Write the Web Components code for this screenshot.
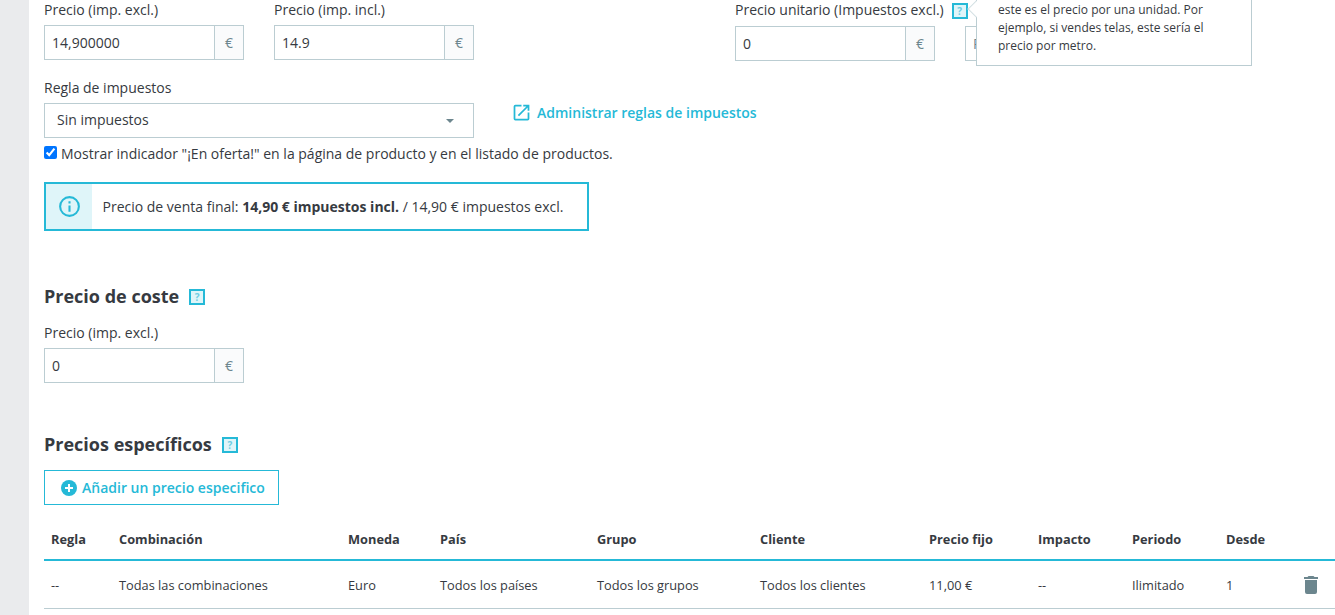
<!DOCTYPE html>
<html lang="es">
<head>
<meta charset="utf-8">
<title>Precios</title>
<style>
  html, body { margin: 0; height: 615px; overflow: hidden; background: #eaebed; }
  body { font-family: "Open Sans", sans-serif; color: #363a41; }
  .top { display: flex; align-items: flex-start; }
  .row { display: flex; gap: 30px; }
  .sale { display: flex; align-items: center; gap: 4px; margin-top: 4px; height: 20px; font-size: 14px; white-space: nowrap; }
  .sale input { margin: 0; }
  .sale span { position: relative; top: 1px; }
  .cost { margin-top: 53px; }
  .cost-field { margin-top: 15px; }
  .specific { margin-top: 49px; }
</style>
</head>
<body>
<price-page>
  <section class="top">
    <div class="row">
      <price-field label="Precio (imp. excl.)" value="14,900000"></price-field>
      <price-field label="Precio (imp. incl.)" value="14.9"></price-field>
    </div>
    <unit-price>
      <hover-tip>este es el precio por una unidad. Por ejemplo, si vendes telas, este sería el precio por metro.</hover-tip>
    </unit-price>
  </section>
  <tax-rule></tax-rule>
  <label class="sale"><input type="checkbox" checked><span>Mostrar indicador "¡En oferta!" en la página de producto y en el listado de productos.</span></label>
  <info-alert>Precio de venta final: <b>14,90 € impuestos incl.</b> / 14,90 € impuestos excl.</info-alert>
  <section-title class="cost">Precio de coste</section-title>
  <price-field class="cost-field" label="Precio (imp. excl.)" value="0"></price-field>
  <section-title class="specific">Precios específicos</section-title>
  <add-button>Añadir un precio especifico</add-button>
  <specific-table></specific-table>
</price-page>

<script>
// each component keeps its own markup and styles in an open shadow root
class PricePage extends HTMLElement {
  connectedCallback() {
    this.attachShadow({ mode: 'open' });
    this.shadowRoot.innerHTML = `
      <style>
        :host {
          display: block;
          margin-left: 29px;
          padding-left: 15px;
          height: 615px;
          background: #fff;
          overflow: hidden;
          position: relative;
        }
      </style>
      <slot></slot>
    `;
  }
}

class PriceField extends HTMLElement {
  connectedCallback() {
    this.attachShadow({ mode: 'open' });
    this.shadowRoot.innerHTML = `
      <style>
        :host { display: block; width: 200px; }
        .label { font-size: 14px; line-height: 19px; height: 25px; white-space: nowrap; color: #363a41; }
        .box {
          display: flex;
          height: 35px;
          box-sizing: border-box;
          border: 1px solid #bbcdd2;
          font-size: 14px;
          color: #363a41;
        }
        .value { flex: 1; padding-left: 7px; line-height: 33px; }
        .unit {
          width: 28px;
          border-left: 1px solid #bbcdd2;
          background: #fafbfc;
          color: #6c868e;
          text-align: center;
          line-height: 33px;
        }
      </style>
      <div class="label">${this.getAttribute('label')}</div>
      <div class="box">
        <span class="value">${this.getAttribute('value')}</span>
        <span class="unit">€</span>
      </div>
    `;
  }
}

class HelpMark extends HTMLElement {
  connectedCallback() {
    this.attachShadow({ mode: 'open' });
    this.shadowRoot.innerHTML = `
      <style>
        :host {
          display: inline-block;
          width: 16px;
          height: 16px;
          box-sizing: border-box;
          border: 2px solid #25b9d7;
          background: #dff5f9;
          color: #6fcde2;
          font: 700 10px/12px "Open Sans", sans-serif;
          text-align: center;
        }
      </style>?
    `;
  }
}

class UnitPrice extends HTMLElement {
  connectedCallback() {
    this.attachShadow({ mode: 'open' });
    this.shadowRoot.innerHTML = `
      <style>
        :host { display: block; margin-left: 261px; }
        .label { display: flex; align-items: flex-start; gap: 8px; font-size: 14px; line-height: 19px; height: 26px; white-space: nowrap; }
        .label help-mark { margin-top: 3px; }
        .inputs { display: flex; gap: 30px; }
        .box { display: flex; width: 200px; height: 35px; box-sizing: border-box; border: 1px solid #bbcdd2; font-size: 14px; }
        .value { flex: 1; padding-left: 7px; line-height: 33px; }
        .unit { width: 28px; border-left: 1px solid #bbcdd2; background: #fafbfc; color: #6c868e; text-align: center; line-height: 33px; }
        .other { width: 60px; height: 35px; box-sizing: border-box; border: 1px solid #bbcdd2; padding-left: 7px; font-size: 14px; line-height: 33px; color: #6c868e; }
      </style>
      <div class="label">Precio unitario (Impuestos excl.) <help-mark></help-mark></div>
      <div class="inputs">
        <div class="box"><span class="value">0</span><span class="unit">€</span></div>
        <div class="other">P</div>
      </div>
      <slot></slot>
    `;
  }
}

class HoverTip extends HTMLElement {
  connectedCallback() {
    this.attachShadow({ mode: 'open' });
    this.shadowRoot.innerHTML = `
      <style>
        :host {
          position: absolute;
          left: 947px;
          top: -20px;
          width: 276px;
          height: 86px;
          box-sizing: border-box;
          padding: 20px 20px 0 21px;
          background: #fff;
          border: 1px solid #bbcdd2;
          font-size: 12px;
          line-height: 18px;
          color: #363a41;
        }
        .arrow {
          position: absolute;
          left: -7px;
          top: 22px;
          width: 12px;
          height: 12px;
          box-sizing: border-box;
          background: #fff;
          border-left: 1px solid #d3e0e3;
          border-bottom: 1px solid #d3e0e3;
          transform: rotate(45deg);
        }
      </style>
      <span class="arrow"></span>
      <slot></slot>
    `;
  }
}

class TaxRule extends HTMLElement {
  connectedCallback() {
    this.attachShadow({ mode: 'open' });
    this.shadowRoot.innerHTML = `
      <style>
        :host { display: flex; align-items: flex-start; gap: 37px; margin-top: 17px; }
        .left { width: 430px; }
        .label { font-size: 14px; line-height: 19px; height: 25px; }
        .select {
          display: flex;
          align-items: center;
          justify-content: space-between;
          height: 35px;
          box-sizing: border-box;
          border: 1px solid #bbcdd2;
          padding: 0 19px 2px 12px;
          font-size: 14px;
        }
        .caret { width: 0; height: 0; margin-top: 2px; border: 4px solid transparent; border-top: 4px solid #6c868e; border-bottom: 0; }
        a { display: flex; align-items: center; gap: 5px; margin-top: 24px; height: 21px; font-size: 14px; font-weight: 600; color: #25b9d7; white-space: nowrap; }
        svg { width: 21px; height: 21px; }
      </style>
      <div class="left">
        <div class="label">Regla de impuestos</div>
        <div class="select"><span>Sin impuestos</span><span class="caret"></span></div>
      </div>
      <a>
        <svg viewBox="0 0 24 24" fill="#25b9d7"><path d="M19 19H5V5h7V3H5a2 2 0 0 0-2 2v14a2 2 0 0 0 2 2h14a2 2 0 0 0 2-2v-7h-2v7zM14 3v2h3.59l-9.83 9.83 1.41 1.41L19 6.41V10h2V3h-7z"/></svg>
        Administrar reglas de impuestos
      </a>
    `;
  }
}

class InfoAlert extends HTMLElement {
  connectedCallback() {
    this.attachShadow({ mode: 'open' });
    this.shadowRoot.innerHTML = `
      <style>
        :host {
          display: flex;
          width: 545px;
          height: 49px;
          box-sizing: border-box;
          margin-top: 20px;
          border: 2px solid #25b9d7;
          font-size: 14px;
          color: #363a41;
        }
        .icon { width: 46px; display: flex; align-items: center; justify-content: center; background: #dff5f9; }
        svg { width: 25px; height: 25px; }
        .text { padding-left: 10.5px; line-height: 45px; white-space: nowrap; }
      </style>
      <span class="icon">
        <svg viewBox="0 0 24 24" fill="#25b9d7"><path d="M11 7h2v2h-2zm0 4h2v6h-2zm1-9a10 10 0 1 0 0 20 10 10 0 0 0 0-20zm0 18a8 8 0 1 1 0-16 8 8 0 0 1 0 16z"/></svg>
      </span>
      <span class="text"><slot></slot></span>
    `;
  }
}

class SectionTitle extends HTMLElement {
  connectedCallback() {
    this.attachShadow({ mode: 'open' });
    this.shadowRoot.innerHTML = `
      <style>
        :host { display: flex; align-items: center; gap: 10px; height: 24px; font-size: 18px; font-weight: 700; color: #363a41; white-space: nowrap; }
        help-mark { margin-top: 2px; }
      </style>
      <slot></slot><help-mark></help-mark>
    `;
  }
}

class AddButton extends HTMLElement {
  connectedCallback() {
    this.attachShadow({ mode: 'open' });
    this.shadowRoot.innerHTML = `
      <style>
        :host {
          display: flex;
          align-items: center;
          gap: 5px;
          width: 235px;
          height: 35px;
          box-sizing: border-box;
          margin-top: 14px;
          padding-left: 16px;
          border: 1px solid #25b9d7;
          font-size: 14px;
          font-weight: 600;
          color: #25b9d7;
          white-space: nowrap;
        }
        svg { width: 16px; height: 16px; }
      </style>
      <svg viewBox="0 0 16 16"><circle cx="8" cy="8" r="8" fill="#25b9d7"/><path d="M7 4h2v3h3v2H9v3H7V9H4V7h3z" fill="#fff"/></svg>
      <slot></slot>
    `;
  }
}

const tableHead = ['Regla', 'Combinación', 'Moneda', 'País', 'Grupo', 'Cliente', 'Precio fijo', 'Impacto', 'Periodo', 'Desde', ''];
const tableRow = ['--', 'Todas las combinaciones', 'Euro', 'Todos los países', 'Todos los grupos', 'Todos los clientes', '11,00 €', '--', 'Ilimitado', '1'];

class SpecificTable extends HTMLElement {
  connectedCallback() {
    this.attachShadow({ mode: 'open' });
    this.shadowRoot.innerHTML = `
      <style>
        :host { display: block; margin-top: 17px; font-size: 12.8px; color: #363a41; }
        .tr {
          display: grid;
          grid-template-columns: 68px 229px 92px 157px 163px 169px 109px 94px 94px 75px 1fr;
          align-items: center;
          white-space: nowrap;
        }
        .tr > span { padding-left: 7px; }
        .head { height: 37px; font-weight: 700; border-bottom: 2px solid #25b9d7; align-items: start; line-height: 34px; }
        .body { height: 47px; border-bottom: 1px solid #bbcdd2; }
        svg { display: block; width: 24px; height: 24px; margin-left: -2px; }
      </style>
      <div class="tr head">${tableHead.map(t => `<span>${t}</span>`).join('')}</div>
      <div class="tr body">
        ${tableRow.map(t => `<span>${t}</span>`).join('')}
        <span><svg viewBox="0 0 24 24" fill="#6c868e"><path d="M6 19a2 2 0 0 0 2 2h8a2 2 0 0 0 2-2V7H6v12zM19 4h-3.5l-1-1h-5l-1 1H5v2h14V4z"/></svg></span>
      </div>
    `;
  }
}

customElements.define('price-page', PricePage);
customElements.define('price-field', PriceField);
customElements.define('help-mark', HelpMark);
customElements.define('unit-price', UnitPrice);
customElements.define('hover-tip', HoverTip);
customElements.define('tax-rule', TaxRule);
customElements.define('info-alert', InfoAlert);
customElements.define('section-title', SectionTitle);
customElements.define('add-button', AddButton);
customElements.define('specific-table', SpecificTable);
</script>
</body>
</html>
